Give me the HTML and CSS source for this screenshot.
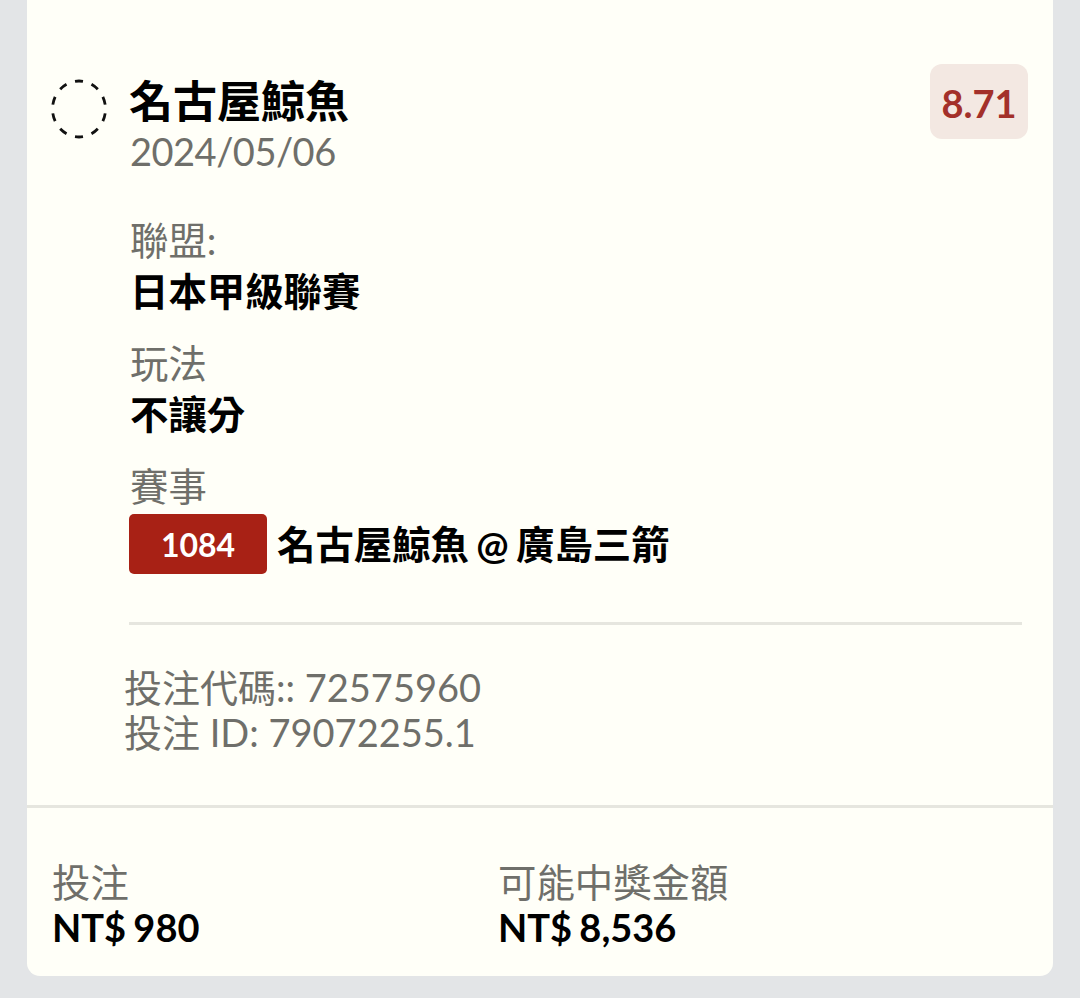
FILE: index.html
```html
<!DOCTYPE html>
<html>
	<head>
		<meta charset="UTF-8">
		<title></title>
		<link rel="stylesheet" href="styles.css">
	</head>
	<body>
		<div class="card">
			<div class="bet">
				<svg class="status" width="58" height="62" viewBox="0 0 58 62">
					<ellipse cx="29" cy="31" rx="26.5" ry="28" pathLength="170" fill="none" stroke="#111" stroke-width="2.8" stroke-dasharray="8 9" stroke-dashoffset="-4.5"/>
				</svg>
				<div class="main">
					<div class="head">
						<div>
							<div class="team">名古屋鯨魚</div>
							<div class="date">2024/05/06</div>
						</div>
						<div class="odds">8.71</div>
					</div>
					<div class="field">
						<div class="label">聯盟:</div>
						<div class="value">日本甲級聯賽</div>
					</div>
					<div class="field">
						<div class="label">玩法</div>
						<div class="value">不讓分</div>
					</div>
					<div class="field">
						<div class="label">賽事</div>
						<div class="match">
							<span class="num">1084</span>
							<span class="value">名古屋鯨魚 @ 廣島三箭</span>
						</div>
					</div>
				</div>
			</div>
			<div class="codes">
				<div>投注代碼:: 72575960</div>
				<div>投注 ID: 79072255.1</div>
			</div>
			<div class="bottom">
				<div class="col">
					<div class="label">投注</div>
					<div class="money">NT$ 980</div>
				</div>
				<div class="col">
					<div class="label">可能中獎金額</div>
					<div class="money">NT$ 8,536</div>
				</div>
			</div>
		</div>
	</body>
</html>
```

FILE: styles.css
```css
html,body{
	margin: 0;
	height: 998px;
	overflow: hidden;
}
body{
	background-color: #e3e5e7;
	font-family: "Lato", "Noto Sans CJK TC", sans-serif;
	color: #000;
}
.card{
	width: 1026px;
	height: 976px;
	margin-left: 27px;
	background-color: #fffff8;
	border-radius: 0 0 13px 13px;
	box-sizing: border-box;
	padding-top: 64px;
}
.bet{
	display: flex;
	padding: 0 25px 0 23px;
}
.status{
	margin-top: 14px;
	flex: none;
}
.main{
	flex: 1;
	margin-left: 22px;
}
.head{
	display: flex;
	justify-content: space-between;
	align-items: flex-start;
}
.team{
	font-size: 44px;
	font-weight: 700;
	line-height: 50px;
	margin: 12px 0 0 -1px;
}
.date{
	font-size: 38px;
	letter-spacing: -0.5px;
	line-height: 50px;
	color: #6f6f6a;
}
.odds{
	width: 98px;
	height: 75px;
	line-height: 78px;
	text-align: center;
	font-size: 38px;
	font-weight: 700;
	color: #a3302a;
	background-color: #f3e8e2;
	border-radius: 12px;
}
.field{
	margin-top: 20px;
}
.head + .field{
	margin-top: 39px;
}
.label{
	font-size: 38.4px;
	line-height: 50px;
	color: #6f6f6a;
}
.value{
	font-size: 38.4px;
	font-weight: 700;
	line-height: 52px;
}
.field + .field{
	margin-top: 21px;
}
.match{
	display: flex;
	align-items: center;
	margin: 3px 0 0 -1px;
	word-spacing: -2px;
}
.num{
	width: 138px;
	height: 60px;
	line-height: 62px;
	text-align: center;
	font-size: 32px;
	font-weight: 700;
	color: #fff;
	background-color: #a82115;
	border-radius: 5px;
	margin-right: 10px;
}
.codes{
	margin: 48px 31px 0 102px;
	padding-top: 40px;
	border-top: 3px solid #e6e6df;
	font-size: 38px;
	line-height: 45px;
	color: #6f6f6a;
	text-indent: -5px;
}
.bottom{
	display: flex;
	margin-top: 50px;
	padding: 51px 0 0 26px;
	border-top: 3px solid #e6e6df;
}
.bottom .label{
	line-height: 46px;
	margin-left: -1px;
}
.col{
	width: 446px;
}
.money{
	font-size: 38px;
	font-weight: 700;
	line-height: 44px;
	margin-left: -1px;
	word-spacing: -2px;
}
```
